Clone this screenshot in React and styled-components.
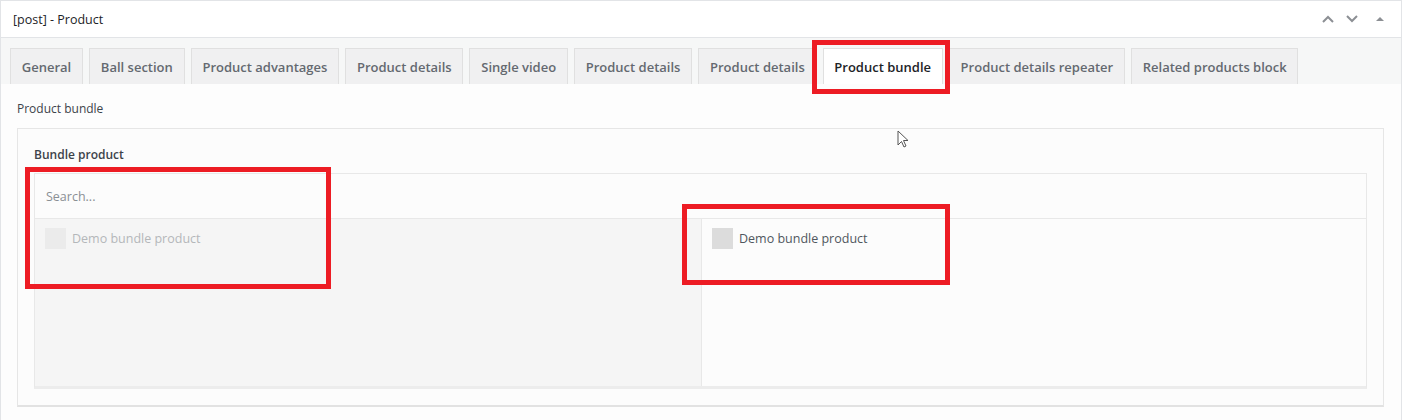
import React from "react";
import styled, { createGlobalStyle } from "styled-components";

const GlobalStyle = createGlobalStyle`
  body {
    margin: 0;
    background: #fafbfb;
    font-family: "Open Sans", "Noto Sans", Arial, sans-serif;
    color: #1d2327;
  }
`;

const Page = styled.div`
  position: relative;
  width: 1402px;
  height: 420px;
  overflow: hidden;
`;

const Postbox = styled.div`
  background: #fff;
  border-left: 1px solid #e2e4e7;
  border-right: 1px solid #e2e4e7;
  border-top: 1px solid #e2e4e7;
`;

const Header = styled.div`
  height: 36px;
  display: flex;
  align-items: center;
  justify-content: space-between;
  padding: 0 12px 0 12px;
  border-bottom: 1px solid #e2e4e7;
  font-size: 12.5px;
  color: #1d2327;
`;

const Controls = styled.div`
  display: flex;
  align-items: center;
  gap: 10px;
  color: #8c8f94;
`;

const TabNav = styled.div`
  display: flex;
  gap: 6px;
  padding: 10px 9px 0;
  background: #f6f7f7;
`;

const Tab = styled.div`
  height: 35px;
  display: flex;
  align-items: center;
  padding: 0 10.8px;
  border: 1px solid #e0e0e0;
  border-bottom: 0;
  background: ${p => (p.$active ? "#fff" : "#f0f0f1")};
  color: ${p => (p.$active ? "#1d2327" : "#646970")};
  font-size: 13px;
  font-weight: 600;
  white-space: nowrap;
`;

const Content = styled.div`
  background: #fdfdfd;
  padding: 17px 17px 17px 16px;
`;

const SectionLabel = styled.div`
  font-size: 12px;
  font-weight: 500;
  color: #3c434a;
  margin-bottom: 11px;
  line-height: 16px;
`;

const FieldBox = styled.div`
  border: 1px solid #e6e6e6;
  border-bottom: 2px solid #e2e2e2;
  background: #fcfcfc;
  padding: 18px 16px 16px 16px;
`;

const FieldLabel = styled.div`
  font-size: 12px;
  font-weight: 600;
  color: #3c434a;
  line-height: 16px;
  margin-bottom: 10px;
`;

const Relationship = styled.div`
  border: 1px solid #e8e8e8;
  border-bottom: 3px solid #ececec;
`;

const SearchRow = styled.div`
  height: 44px;
  display: flex;
  align-items: center;
  padding: 0 11px;
  border-bottom: 1px solid #e8e8e8;
  background: #fcfcfc;
  font-size: 12.5px;
  color: #8a8f94;
`;

const Columns = styled.div`
  display: grid;
  grid-template-columns: 666px 1fr;
  height: 167px;
`;

const Column = styled.div`
  background: ${p => (p.$side === "left" ? "#f5f5f5" : "#fcfcfc")};
  border-left: ${p => (p.$side === "left" ? "0" : "1px solid #e8e8e8")};
  padding: 9px 10px;
`;

const Item = styled.div`
  display: flex;
  align-items: center;
  gap: 6px;
  font-size: 12.5px;
  color: ${p => (p.$muted ? "#b4b7ba" : "#50575e")};
`;

const Check = styled.span`
  width: 21px;
  height: 21px;
  background: ${p => (p.$muted ? "#ebebeb" : "#dcdcdc")};
  flex: none;
`;

const Highlight = styled.div`
  position: absolute;
  left: ${p => p.$x}px;
  top: ${p => p.$y}px;
  width: ${p => p.$w}px;
  height: ${p => p.$h}px;
  border: 5px solid #ed1c24;
  box-sizing: border-box;
  pointer-events: none;
`;

const Cursor = styled.svg`
  position: absolute;
  left: 897px;
  top: 130px;
`;

const Chevron = ({ dir }) => (
  <svg width="14" height="10" viewBox="0 0 14 10">
    <path
      d={dir === "up" ? "M2 8 L7 3 L12 8" : "M2 2 L7 7 L12 2"}
      fill="none"
      stroke="#8c8f94"
      strokeWidth="2"
    />
  </svg>
);

const tabs = [
  "General",
  "Ball section",
  "Product advantages",
  "Product details",
  "Single video",
  "Product details",
  "Product details",
  "Product bundle",
  "Product details repeater",
  "Related products block",
];

export default function App() {
  return (
    <Page>
      <GlobalStyle />
      <Postbox>
        <Header>
          <span>[post] - Product</span>
          <Controls>
            <Chevron dir="up" />
            <Chevron dir="down" />
            <svg width="20" height="10" viewBox="0 0 20 10">
              <path d="M11 3 L15 7 L7 7 Z" fill="#8c8f94" />
            </svg>
          </Controls>
        </Header>
        <TabNav>
          {tabs.map((t, i) => (
            <Tab key={i} $active={t === "Product bundle"}>
              {t}
            </Tab>
          ))}
        </TabNav>
        <Content>
          <SectionLabel>Product bundle</SectionLabel>
          <FieldBox>
            <FieldLabel>Bundle product</FieldLabel>
            <Relationship>
              <SearchRow>Search...</SearchRow>
              <Columns>
                <Column $side="left">
                  <Item $muted>
                    <Check $muted />
                    Demo bundle product
                  </Item>
                </Column>
                <Column $side="right">
                  <Item>
                    <Check />
                    Demo bundle product
                  </Item>
                </Column>
              </Columns>
            </Relationship>
          </FieldBox>
        </Content>
      </Postbox>

      <Highlight $x={812} $y={40} $w={138} $h={54} />
      <Highlight $x={25} $y={167} $w={306} $h={122} />
      <Highlight $x={682} $y={204} $w={268} $h={81} />

      <Cursor width="14" height="20" viewBox="0 0 14 20">
        <path
          d="M1 1 L1 15 L4.5 11.5 L7 17 L9 16 L6.5 10.5 L11 10.5 Z"
          fill="#fff"
          stroke="#555"
          strokeWidth="1"
          strokeLinejoin="round"
        />
      </Cursor>
    </Page>
  );
}
